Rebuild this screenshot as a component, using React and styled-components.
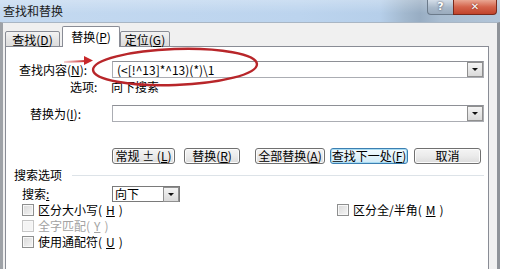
import styled, { createGlobalStyle } from "styled-components";

const GlobalStyle = createGlobalStyle`
  body {
    margin: 0;
    background: #ffffff;
    font-family: "Noto Sans CJK SC", "Noto Sans", sans-serif;
    font-size: 12px;
    color: #000;
  }
`;

/**
 * Find & replace dialog (Word, Windows 7 look)
 */
export default function App() {
  return (
    <>
      <GlobalStyle />
      <Window>
        <TitleBar>
          <Title>查找和替换</Title>
          <CaptionButtons>
            <HelpButton>?</HelpButton>
            <CloseButton>✕</CloseButton>
          </CaptionButtons>
        </TitleBar>
        <Body>
          <TabStrip>
            <Tab $w={55}>查找(<u>D</u>)</Tab>
            <Tab $w={58} $active>替换(<u>P</u>)</Tab>
            <Tab $w={50}>定位(<u>G</u>)</Tab>
          </TabStrip>
          <Panel>
            <Row $mt={14}>
              <Label $indent={13}>查找内容(<u>N</u>):</Label>
              <Combo>
                <ComboText>{"(<[!^13]*^13)(*)\\1"}</ComboText>
                <DropButton />
              </Combo>
            </Row>
            <Row $mt={2} $h={14}>
              <Label $indent={64}>选项:</Label>
              <Value>向下搜索</Value>
            </Row>
            <Row $mt={11}>
              <Label $indent={24}>替换为(<u>I</u>):</Label>
              <Combo>
                <ComboText />
                <DropButton />
              </Combo>
            </Row>
            <ButtonRow>
              <Button $w={63}>常规 ± (<u>L</u>)</Button>
              <Button $w={56} $ml={9}>替换(<u>R</u>)</Button>
              <Button $w={70} $ml={15}>全部替换(<u>A</u>)</Button>
              <Button $w={78} $ml={5} $focus>查找下一处(<u>F</u>)</Button>
              <Button $w={67} $ml={6}>取消</Button>
            </ButtonRow>
            <GroupHeading>
              <span>搜索选项</span>
              <Rule />
            </GroupHeading>
            <Row $mt={4} $h={16}>
              <Label $indent={16}>搜索<u>:</u></Label>
              <Select>
                <SelectText>向下</SelectText>
                <DropButton />
              </Select>
            </Row>
            <OptionGrid>
              <Check>
                <Box />
                区分大小写(<u>H</u>)
              </Check>
              <Check>
                <Box />
                区分全/半角(<u>M</u>)
              </Check>
              <Check $disabled>
                <Box $disabled />
                全字匹配(<u>Y</u>)
              </Check>
              <span />
              <Check>
                <Box />
                使用通配符(<u>U</u>)
              </Check>
            </OptionGrid>
          </Panel>
        </Body>
        <Annotation width="220" height="60" viewBox="0 0 220 60">
          <defs>
            <linearGradient id="shaft" x1="0" x2="1" y1="0" y2="0">
              <stop offset="0" stopColor="#c8282a" stopOpacity="0.2" />
              <stop offset="1" stopColor="#c8282a" />
            </linearGradient>
          </defs>
          <path d="M4 22 L26 21" stroke="url(#shaft)" strokeWidth="2" fill="none" />
          <path d="M24 16 L33 20.5 L24 25 Z" fill="#c8282a" />
          <ellipse
            cx="115"
            cy="27"
            rx="82"
            ry="18"
            transform="rotate(-2 115 27)"
            fill="none"
            stroke="#b8262a"
            strokeWidth="2.4"
          />
        </Annotation>
      </Window>
    </>
  );
}

/**
 * Styles
 */
const Window = styled.div`
  position: relative;
  width: 500px;
  height: 269px;
  display: flex;
  flex-direction: column;
  overflow: hidden;
`;

const TitleBar = styled.div`
  height: 22px;
  flex: 0 0 22px;
  display: flex;
  align-items: flex-start;
  justify-content: space-between;
  background: linear-gradient(
      180deg,
      rgba(255, 255, 255, 0.25) 0%,
      rgba(255, 255, 255, 0) 60%
    ),
    linear-gradient(
      90deg,
      #c4d9f0 0%,
      #bcd4ee 60%,
      #b6cfea 76%,
      #a2b8ce 81%,
      #98adc3 84%,
      #a9bdd1 88%,
      #b2c5d8 100%
    );
`;

const Title = styled.div`
  padding: 4px 0 0 3px;
  font-size: 12px;
  line-height: 14px;
  color: #1a1a1a;
`;

const CaptionButtons = styled.div`
  display: flex;
  margin-right: 3px;
`;

const HelpButton = styled.div`
  width: 26px;
  height: 15px;
  box-sizing: border-box;
  border: 1px solid #6b7a8a;
  border-top: none;
  border-right: none;
  border-radius: 0 0 0 4px;
  background: linear-gradient(#d3dde8, #a8b8c9 55%, #9aabbd);
  color: #fff;
  font: bold 11px/14px "DejaVu Sans", sans-serif;
  text-align: center;
  text-shadow: 0 0 2px #334;
`;

const CloseButton = styled.div`
  width: 44px;
  height: 15px;
  box-sizing: border-box;
  border: 1px solid #7a2a1c;
  border-top: none;
  border-radius: 0 0 4px 0;
  background: linear-gradient(#e9a793, #d4634b 50%, #c1442c);
  color: #fff;
  font: bold 10px/14px "DejaVu Sans", sans-serif;
  text-align: center;
  text-shadow: 0 0 2px #5a1a10;
`;

const Body = styled.div`
  flex: 1;
  display: flex;
  flex-direction: column;
  background: #f0f0f0;
  border-left: 3px solid #9ea2a7;
  border-right: 3px solid #8f9399;
  border-top: 1px solid #a9b6c4;
  padding: 4px 8px 0 2px;
  min-height: 0;
`;

const TabStrip = styled.div`
  display: flex;
  align-items: flex-end;
  height: 20px;
  position: relative;
  z-index: 1;
  margin-bottom: -1px;
`;

const Tab = styled.div`
  box-sizing: border-box;
  width: ${(p) => p.$w}px;
  height: ${(p) => (p.$active ? 21 : 16)}px;
  margin: ${(p) => (p.$active ? "0 0 0 2px" : "0")};
  padding-top: ${(p) => (p.$active ? 2 : 0)}px;
  border: 1px solid #898c95;
  border-bottom: ${(p) => (p.$active ? "none" : "1px solid #898c95")};
  border-radius: 2px 2px 0 0;
  background: ${(p) =>
    p.$active ? "#ffffff" : "linear-gradient(#f3f3f3, #e6e6e6 50%, #dcdcdc)"};
  text-align: center;
  line-height: 15px;
  font-size: 12px;
`;

const Panel = styled.div`
  flex: 1;
  background: #ffffff;
  border: 1px solid #898c95;
  border-bottom: none;
  padding: 0 4px 0 0;
  display: flex;
  flex-direction: column;
`;

const Row = styled.div`
  display: flex;
  align-items: center;
  height: ${(p) => p.$h || 17}px;
  margin-top: ${(p) => p.$mt || 0}px;
`;

const Label = styled.div`
  flex: 0 0 106px;
  box-sizing: border-box;
  padding-left: ${(p) => p.$indent}px;
  white-space: nowrap;
  line-height: 14px;
`;

const Value = styled.div`
  margin-left: -1px;
  line-height: 14px;
`;

const Combo = styled.div`
  flex: 1;
  height: 17px;
  box-sizing: border-box;
  display: flex;
  align-items: center;
  justify-content: space-between;
  border: 1px solid #abadb3;
  border-top-color: #8e9096;
  background: #fff;
`;

const ComboText = styled.span`
  padding-left: 4px;
  line-height: 14px;
  white-space: nowrap;
`;

const DropButton = styled.span`
  position: relative;
  width: 16px;
  height: 15px;
  box-sizing: border-box;
  border: 1px solid #8f8f8f;
  background: linear-gradient(#f4f4f4, #dadada);
  &::after {
    content: "";
    position: absolute;
    left: 4px;
    top: 5px;
    border-left: 3px solid transparent;
    border-right: 3px solid transparent;
    border-top: 3px solid #111;
  }
`;

const ButtonRow = styled.div`
  display: flex;
  margin: 26px 0 0 106px;
`;

const Button = styled.div`
  width: ${(p) => p.$w}px;
  margin-left: ${(p) => p.$ml || 0}px;
  height: 16px;
  box-sizing: border-box;
  border: 1px solid ${(p) => (p.$focus ? "#3c7fb1" : "#707070")};
  border-radius: 3px;
  background: ${(p) =>
    p.$focus
      ? "linear-gradient(#f4fbfe, #e3f3fb 50%, #cfe9f6)"
      : "linear-gradient(#f4f4f4, #ebebeb 50%, #dcdcdc)"};
  box-shadow: ${(p) => (p.$focus ? "inset 0 0 0 1px #a8dcf3" : "inset 0 0 0 1px #fcfcfc")};
  text-align: center;
  line-height: 14px;
  white-space: nowrap;
`;

const GroupHeading = styled.div`
  display: flex;
  align-items: center;
  height: 14px;
  margin-top: 4px;
  padding-left: 8px;
  line-height: 14px;
`;

const Rule = styled.div`
  flex: 1;
  height: 1px;
  margin-left: 10px;
  background: #dde3e8;
`;

const Select = styled.div`
  width: 68px;
  height: 16px;
  box-sizing: border-box;
  display: flex;
  align-items: center;
  justify-content: space-between;
  border: 1px solid #7a7a7a;
  background: #fff;
`;

const SelectText = styled.span`
  padding-left: 2px;
  line-height: 14px;
`;

const OptionGrid = styled.div`
  display: grid;
  grid-template-columns: 315px 1fr;
  grid-auto-rows: 16px;
  padding-left: 16px;
`;

const Check = styled.label`
  display: flex;
  align-items: center;
  gap: 4px;
  line-height: 14px;
  white-space: nowrap;
  color: ${(p) => (p.$disabled ? "#a3a3a3" : "#000")};
`;

const Box = styled.span`
  width: 12px;
  height: 12px;
  box-sizing: border-box;
  border: 1px solid ${(p) => (p.$disabled ? "#c6c6c6" : "#8e8f8f")};
  background: ${(p) =>
    p.$disabled ? "#f4f4f4" : "linear-gradient(135deg, #d8d8d8, #f6f6f6)"};
  box-shadow: inset 0 0 0 1px #f8f8f8;
`;

const Annotation = styled.svg`
  position: absolute;
  left: 60px;
  top: 40px;
  pointer-events: none;
`;
